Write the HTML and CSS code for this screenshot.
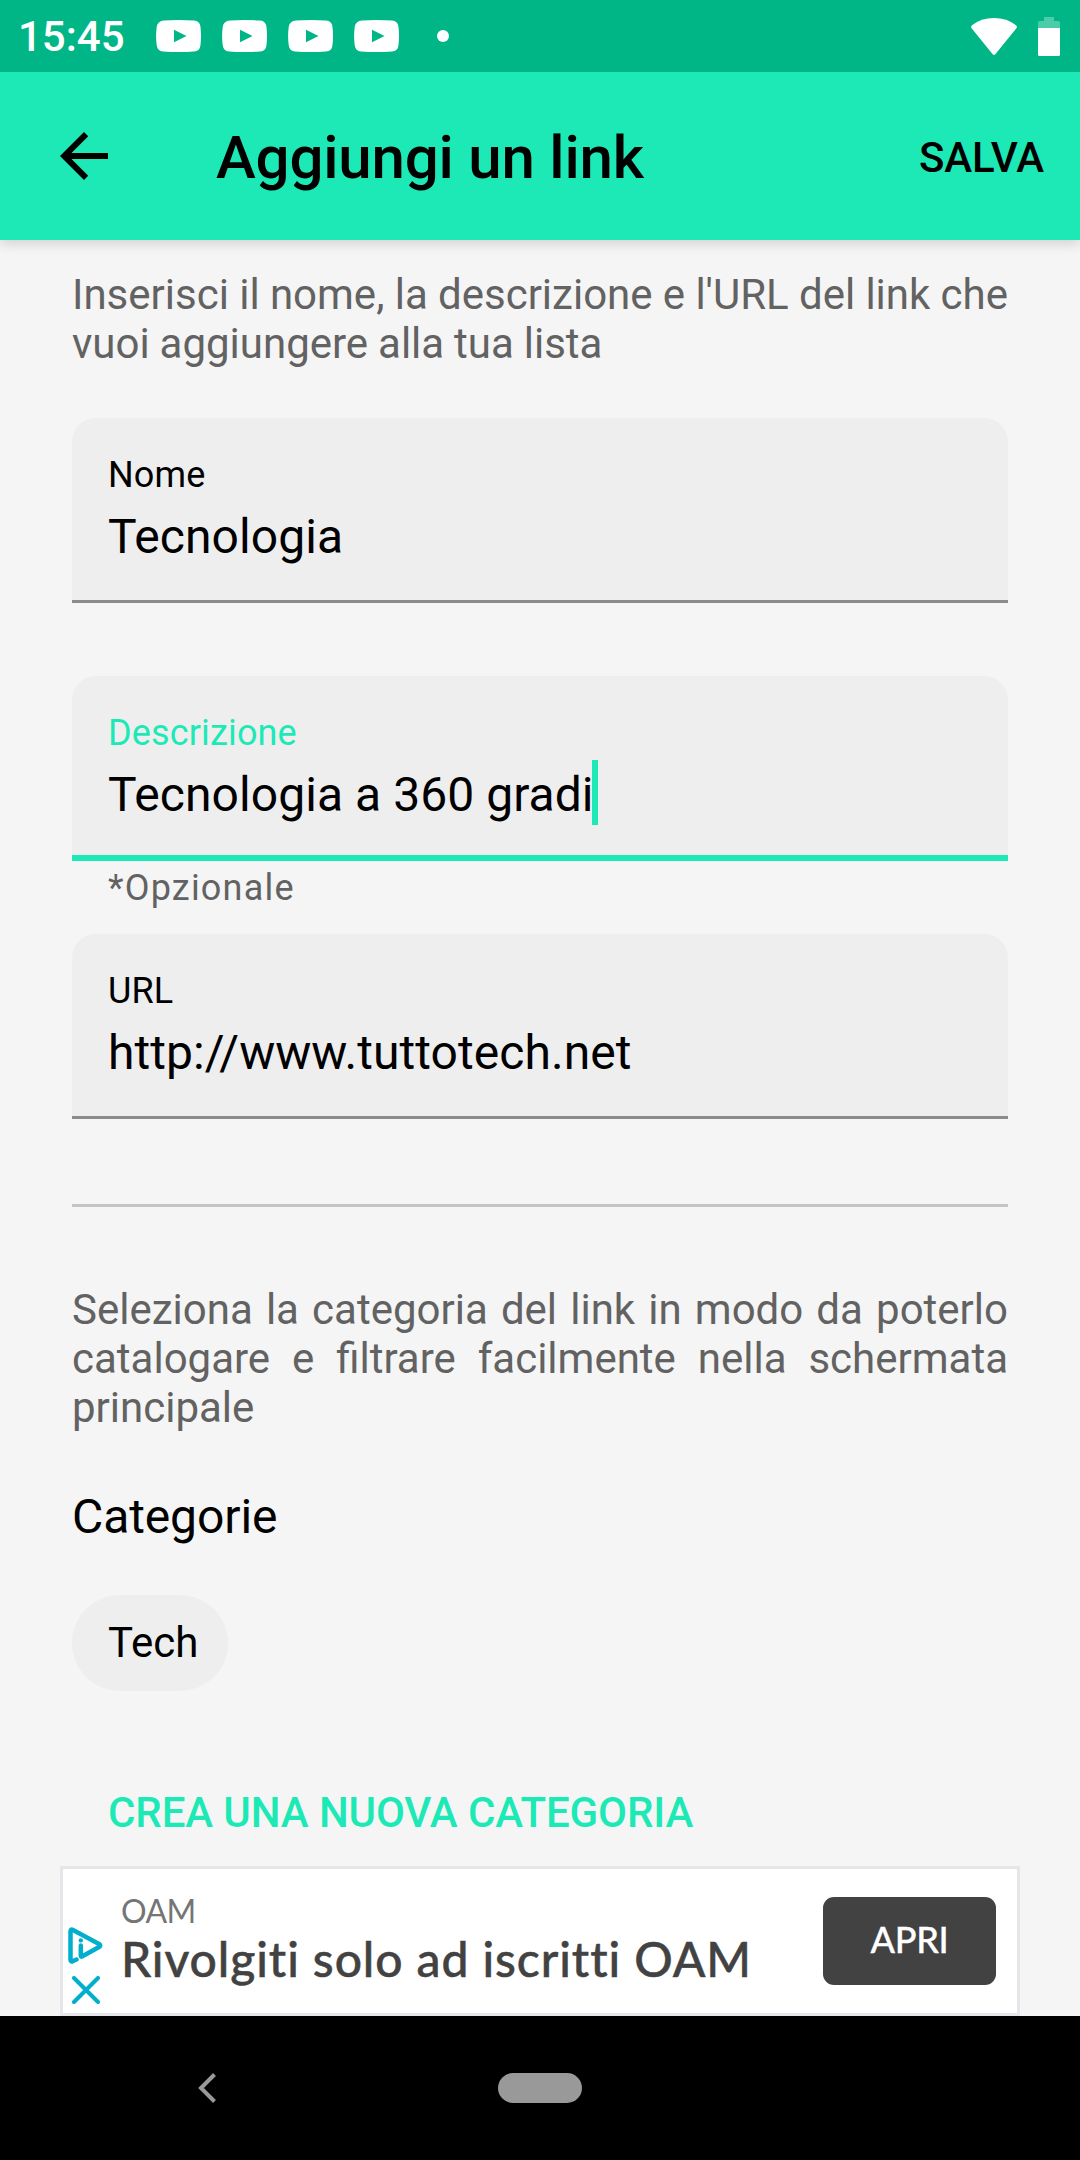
FILE: index.html
```html
<!DOCTYPE html>
<html lang="it">
<head>
<meta charset="utf-8">
<title>Aggiungi un link</title>
<link rel="stylesheet" href="styles.css">
</head>
<body>
<div class="screen">
  <header class="status">
    <span class="clock">15:45</span>
    <div class="notifications">
      <svg class="yt" viewBox="0 0 45 32"><path fill-rule="evenodd" d="M8 .5Q22.500 -.5 38 .5Q44 1 44.500 7Q45.500 16 44.500 25Q44 31 38 31.500Q22.500 32.500 7 31.500Q1.500 31 .7 25Q-.5 16 .7 7Q1.500 1 8 .5ZM18 9.700V22.300L30.500 16Z"/></svg>
      <svg class="yt" viewBox="0 0 45 32"><path fill-rule="evenodd" d="M8 .5Q22.500 -.5 38 .5Q44 1 44.500 7Q45.500 16 44.500 25Q44 31 38 31.500Q22.500 32.500 7 31.500Q1.500 31 .7 25Q-.5 16 .7 7Q1.500 1 8 .5ZM18 9.700V22.300L30.500 16Z"/></svg>
      <svg class="yt" viewBox="0 0 45 32"><path fill-rule="evenodd" d="M8 .5Q22.500 -.5 38 .5Q44 1 44.500 7Q45.500 16 44.500 25Q44 31 38 31.500Q22.500 32.500 7 31.500Q1.500 31 .7 25Q-.5 16 .7 7Q1.500 1 8 .5ZM18 9.700V22.300L30.500 16Z"/></svg>
      <svg class="yt" viewBox="0 0 45 32"><path fill-rule="evenodd" d="M8 .5Q22.500 -.5 38 .5Q44 1 44.500 7Q45.500 16 44.500 25Q44 31 38 31.500Q22.500 32.500 7 31.500Q1.500 31 .7 25Q-.5 16 .7 7Q1.500 1 8 .5ZM18 9.700V22.300L30.500 16Z"/></svg>
      <span class="more"></span>
    </div>
    <div class="system">
      <svg class="wifi" viewBox="0 0 46 37"><path d="M1 7.300Q10 0 23 0T45 7.300Q46.500 8.600 45.400 10.300L24.300 36.200Q23 37.300 21.700 36.200L.6 10.300Q-.5 8.600 1 7.300Z"/></svg>
      <svg class="battery" viewBox="0 0 22 39"><path opacity=".3" d="M6 0H16V4H20.500Q22 4 22 5.500V11H0V5.500Q0 4 1.500 4H6Z"/><path d="M0 11H22V37.500Q22 39 20.500 39H1.500Q0 39 0 37.500Z"/></svg>
    </div>
  </header>

  <nav class="toolbar">
    <svg class="back" viewBox="0 0 24 24"><path d="M20 11H7.830l5.590-5.590L12 4l-8 8 8 8 1.410-1.410L7.830 13H20v-2z"/></svg>
    <h1 class="title">Aggiungi un link</h1>
    <span class="save">SALVA</span>
  </nav>

  <main class="content">
    <p class="hint hint-intro">Inserisci il nome, la descrizione e l'URL del link che vuoi aggiungere alla tua lista</p>

    <div class="field field-first">
      <span class="label">Nome</span>
      <span class="value">Tecnologia</span>
    </div>

    <div class="field focused">
      <span class="label">Descrizione</span>
      <span class="value">Tecnologia a 360 gradi<i class="caret"></i></span>
    </div>
    <span class="helper">*Opzionale</span>

    <div class="field">
      <span class="label">URL</span>
      <span class="value">http://www.tuttotech.net</span>
    </div>

    <hr class="divider">

    <p class="hint">Seleziona la categoria del link in modo da poterlo catalogare e filtrare facilmente nella schermata principale</p>

    <h2 class="section">Categorie</h2>
    <span class="chip">Tech</span>
    <span class="create">CREA UNA NUOVA CATEGORIA</span>
  </main>

  <aside class="ad">
    <div class="choices">
      <svg class="adinfo" viewBox="0 0 35 37"><path d="M8.500 32.500L4.500 34.300Q2.500 35 2.500 32.500V4.500Q2.500 1.700 5 3L31.500 17.200Q33 18.500 31.500 19.800L14 29.500Q12.800 30 12.800 28.500V18.500"/><circle cx="12.800" cy="13.400" r="2.200"/></svg>
      <svg class="adclose" viewBox="0 0 28 28"><path d="M2 2L26 26M26 2L2 26"/></svg>
    </div>
    <div class="adtext">
      <span class="advertiser">OAM</span>
      <span class="headline">Rivolgiti solo ad iscritti OAM</span>
    </div>
    <span class="open">APRI</span>
  </aside>

  <footer class="navbar">
    <svg class="navback" viewBox="0 0 18 30"><path d="M16.500 1.500L3 15L16.500 28.500"/></svg>
    <span class="home"></span>
  </footer>
</div>
</body>
</html>
```
FILE: styles.css
```css
* { box-sizing: border-box; margin: 0; padding: 0; }
body { background: #f5f5f5; font-family: Roboto, sans-serif; color: #000; }
svg { display: block; flex: none; }
.screen { width: 1080px; height: 2160px; display: flex; flex-direction: column; overflow: hidden; }

.status { height: 72px; flex: none; background: #00b686; color: #fff; display: flex; align-items: center; padding: 0 20px 0 18px; z-index: 2; }
.status svg { fill: #fff; }
.clock { font-size: 42px; line-height: 49px; font-weight: 500; width: 138px; padding-top: 1px; }
.notifications { display: flex; align-items: center; gap: 21px; }
.yt { width: 45px; height: 32px; }
.more { width: 12px; height: 12px; border-radius: 50%; background: #fff; margin-left: 17px; }
.system { margin-left: auto; display: flex; align-items: center; gap: 21px; }
.wifi { width: 46px; height: 37px; }
.battery { width: 22px; height: 39px; }

.toolbar { height: 168px; flex: none; background: #1de9b6; display: flex; align-items: center; padding: 0 36px 0 48px; box-shadow: 0 3px 12px rgba(0, 0, 0, .16); z-index: 1; }
.back { width: 72px; height: 72px; }
.title { font-size: 60px; line-height: 70px; font-weight: 500; letter-spacing: -.2px; margin-left: 96px; padding-top: 4px; }
.save { font-size: 42px; line-height: 49px; font-weight: 500; letter-spacing: -.1px; margin-left: auto; padding-top: 2px; }

.content { padding: 30px 72px 0; height: 1626px; flex: none; display: flex; flex-direction: column; }
.hint { font-size: 42px; line-height: 49px; color: #626262; text-align: justify; }
.hint-intro { word-spacing: -.5px; }
.field { height: 185px; flex: none; background: #eee; border-radius: 24px 24px 0 0; border-bottom: 3px solid #8b8b8b; padding: 36px 36px 0; display: flex; flex-direction: column; }
.field-first { margin: 50px 0 73px; }
.label { font-size: 36px; line-height: 42px; letter-spacing: .15px; }
.value { font-size: 48px; line-height: 56px; letter-spacing: .05px; margin-top: 13px; display: flex; }
.focused { border-bottom: 6px solid #1de9b6; }
.focused .label { color: #1de9b6; }
.caret { width: 6px; height: 65px; margin: -7px 0 -2px -2px; background: #1de9b6; }
.helper { height: 73px; padding: 6px 36px 0; font-size: 36px; line-height: 42px; letter-spacing: 1.2px; color: #626262; }
.divider { border: 0; height: 3px; flex: none; background: #c4c4c4; margin: 85px 0 78px; }
.section { font-size: 48px; line-height: 56px; font-weight: 400; letter-spacing: -.1px; margin-top: 57px; }
.chip { align-self: flex-start; height: 96px; margin-top: 50px; padding: 0 30px 0 36px; border-radius: 48px; background: #eee; font-size: 42px; line-height: 96px; }
.create { margin: 97px 36px 0; font-size: 42px; line-height: 49px; font-weight: 500; letter-spacing: -.1px; color: #1de9b6; }

.ad { width: 960px; height: 150px; flex: none; align-self: center; background: #fff; border: 3px solid #e4e6e9; display: flex; padding: 0 21px 0 5px; color: #424242; font-family: Lato, sans-serif; }
.choices { width: 36px; padding-top: 58px; }
.adinfo, .adclose { fill: none; stroke: #00aecd; stroke-width: 4.500; stroke-linecap: round; stroke-linejoin: round; }
.adinfo { width: 35px; height: 37px; }
.adinfo circle { fill: #00aecd; stroke: none; }
.adclose { width: 28px; height: 28px; margin: 12px 0 0 4px; stroke-width: 4; }
.adtext { display: flex; flex-direction: column; margin-left: 17px; padding-top: 22px; white-space: nowrap; }
.advertiser { font-size: 32px; line-height: 39px; letter-spacing: -.6px; color: #757575; }
.headline { font-size: 48px; line-height: 58px; font-weight: 500; letter-spacing: .93px; font-variant-ligatures: none; -webkit-text-stroke: .5px #424242; }
.open { width: 173px; height: 88px; margin: 28px 0 0 auto; border-radius: 11px; background: #424242; color: #fff; font-size: 36px; line-height: 84px; font-weight: 500; letter-spacing: -.3px; text-align: center; -webkit-text-stroke: .3px #fff; }

.navbar { height: 144px; flex: none; background: #000; display: flex; align-items: center; padding-left: 198px; }
.navback { width: 18px; height: 30px; fill: none; stroke: #999; stroke-width: 4; }
.home { width: 84px; height: 30px; border-radius: 15px; background: #999; margin-left: 282px; }
```
